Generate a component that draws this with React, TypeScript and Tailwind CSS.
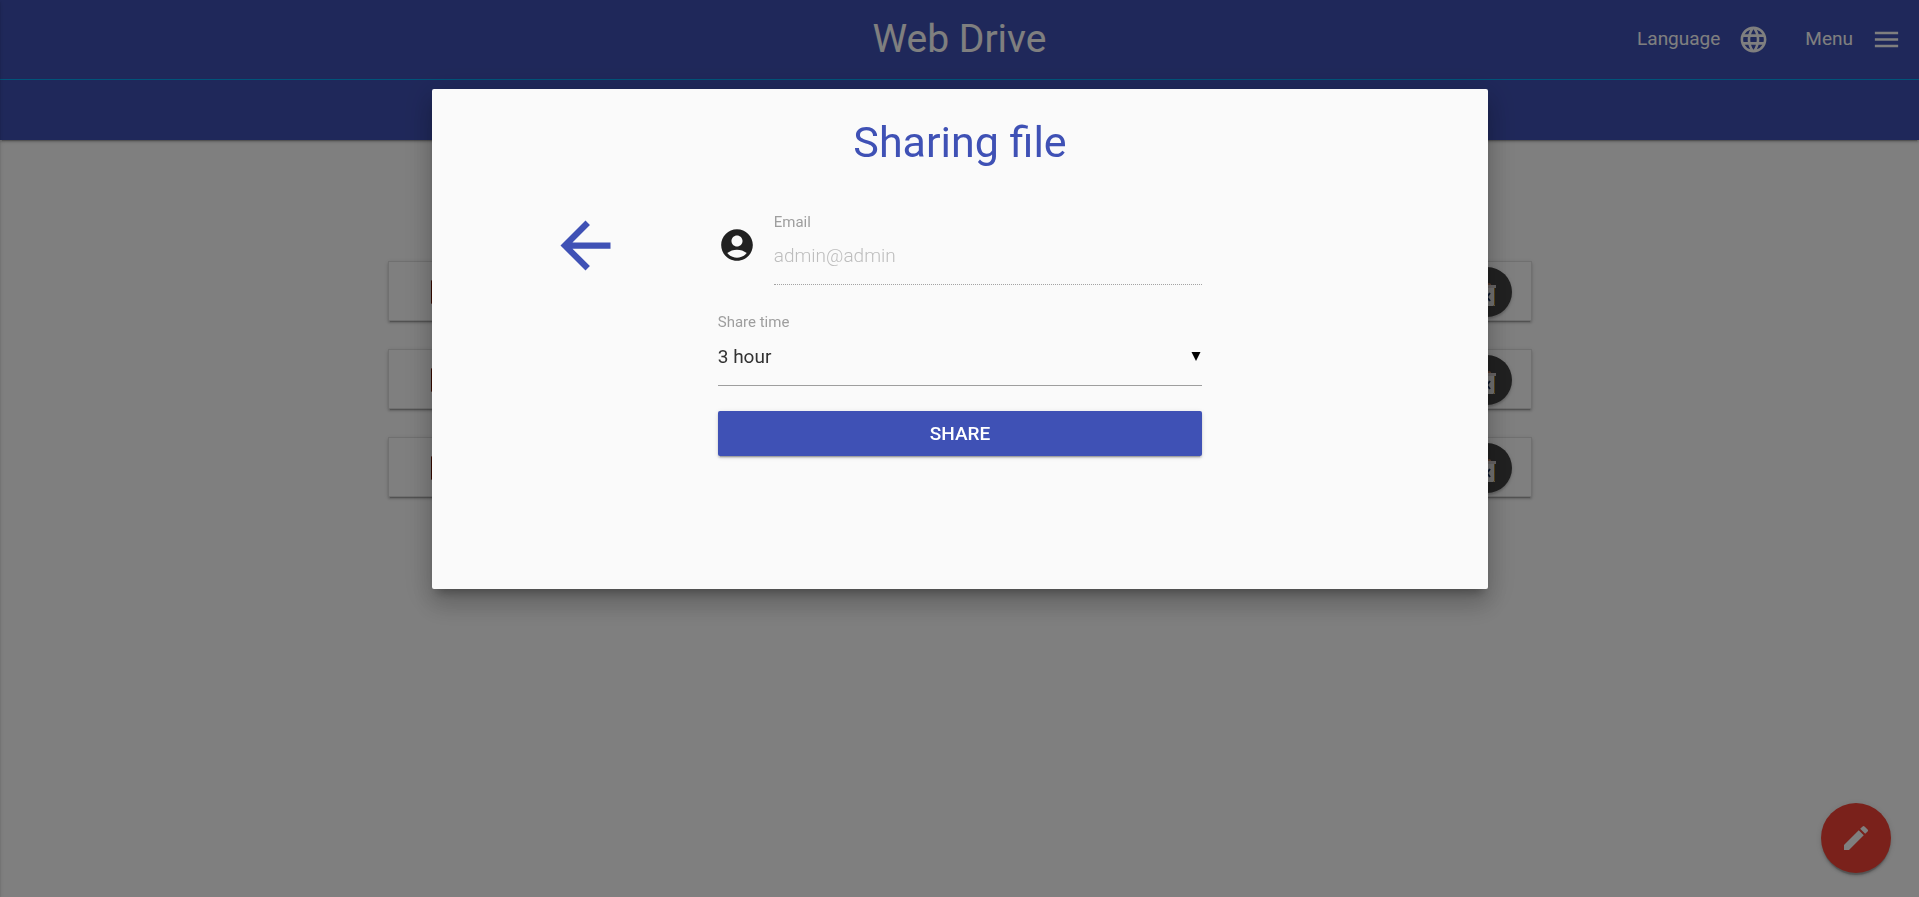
import React from "react";
import {
  MdAccountCircle,
  MdArrowBack,
  MdEdit,
  MdLanguage,
  MdMenu,
} from "react-icons/md";

const files = ["file-1", "file-2", "file-3"];

function TrashIcon() {
  return (
    <svg width="22" height="32" viewBox="0 0 22 32" aria-hidden="true">
      <path d="M6 9 8 7l3 1 2-1 2 1v1z" fill="#b0785c" />
      <rect x="2" y="9" width="18" height="3" fill="#cfc8c8" />
      <path d="M3 12h16v18H4l-1-1z" fill="#e4e4e4" />
      <path d="M18.500 12v17l-1 1" fill="none" stroke="#b08428" />
      <path d="m8 17 6 8m0-8-6 8" stroke="#1c3058" strokeWidth="2" />
    </svg>
  );
}

function FileRow({ name }: { name: string }) {
  return (
    <li className="flex h-[60px] items-center justify-between border border-[#e0e0e0] bg-white pl-[42px] pr-[19px] pt-px shadow-[0_2px_2px_0_rgba(0,0,0,0.14),0_3px_1px_-2px_rgba(0,0,0,0.2),0_1px_5px_0_rgba(0,0,0,0.12)]">
      <span className="h-6 w-5 rounded-[1px] border border-[#701400] bg-[#780808]" />
      <button
        type="button"
        aria-label={`Delete ${name}`}
        className="flex size-[50px] items-center justify-center rounded-full bg-[#424242] shadow-[0_2px_2px_0_rgba(0,0,0,0.14),0_1px_5px_0_rgba(0,0,0,0.12)]"
      >
        <TrashIcon />
      </button>
    </li>
  );
}

function Header() {
  return (
    <header className="bg-[#3f51b5] text-white shadow-[0_2px_2px_0_rgba(0,0,0,0.14),0_3px_1px_-2px_rgba(0,0,0,0.2),0_1px_5px_0_rgba(0,0,0,0.12)]">
      <div className="grid h-20 grid-cols-[1fr_auto_1fr] items-center border-b border-[#03a9f4]">
        <a href="#home" className="col-start-2 text-[39px] leading-none">
          Web Drive
        </a>
        <nav className="flex justify-end gap-0.5 pb-px text-[19px] leading-[30px]">
          <a href="#language" className="flex items-center gap-[18px] px-[17px]">
            Language
            <MdLanguage size={31} aria-hidden="true" />
          </a>
          <a href="#menu" className="flex items-center gap-[18px] px-[17px]">
            Menu
            <MdMenu size={31} aria-hidden="true" />
          </a>
        </nav>
      </div>
      <div className="h-[60px]" />
    </header>
  );
}

function ShareDialog() {
  return (
    <div className="fixed inset-0 flex items-start justify-center bg-black/50 pt-[89px]">
      <section
        role="dialog"
        aria-modal="true"
        aria-labelledby="share-title"
        className="min-h-[500px] w-full max-w-[1056px] rounded-[2px] bg-[#fafafa] pl-[22px] pr-[21px] pt-[23px] shadow-[0_16px_24px_2px_rgba(0,0,0,0.14),0_6px_30px_5px_rgba(0,0,0,0.12),0_8px_10px_-5px_rgba(0,0,0,0.3)]"
      >
        <h1
          id="share-title"
          className="text-center text-[43px] leading-[60px] text-[#3f51b5]"
        >
          Sharing file
        </h1>
        <div className="grid grid-cols-[1fr_2fr_1fr] pt-[35px]">
          <div className="flex items-start justify-center pl-[10px] pt-px">
            <button type="button" aria-label="Back" className="text-[#3f51b5]">
              <MdArrowBack size={75} aria-hidden="true" />
            </button>
          </div>
          <form className="flex flex-col px-[11px]">
            <div className="flex">
              <MdAccountCircle
                size={38}
                aria-hidden="true"
                className="mt-[19px] text-[#212121]"
              />
              <div className="ml-[18px] flex flex-1 flex-col">
                <label
                  htmlFor="email"
                  className="pt-[5px] text-[15px] leading-5 text-[#9e9e9e]"
                >
                  Email
                </label>
                <input
                  id="email"
                  type="email"
                  placeholder="admin@admin"
                  disabled
                  className="h-[53px] border-b border-dotted border-black/35 bg-transparent pb-[6px] text-[19px] font-light placeholder:text-[#bdbdbd] placeholder:opacity-100"
                />
              </div>
            </div>
            <label
              htmlFor="time"
              className="mt-[27px] text-[15px] leading-5 text-[#9e9e9e]"
            >
              Share time
            </label>
            <div className="relative flex">
              <select
                id="time"
                defaultValue="3"
                className="h-[54px] flex-1 appearance-none border-b border-[#9e9e9e] bg-transparent pb-0.5 text-[19px] text-[#333333]"
              >
                <option value="1">1 hour</option>
                <option value="3">3 hour</option>
                <option value="24">24 hour</option>
              </select>
              <svg
                width="10"
                height="9"
                viewBox="0 0 10 9"
                aria-hidden="true"
                className="pointer-events-none absolute right-px top-5"
              >
                <path d="M.5 0h9L5 9z" fill="#000" />
              </svg>
            </div>
            <button
              type="submit"
              className="mt-[25px] h-[45px] rounded-[2px] bg-[#3f51b5] pt-px text-[19px] font-medium text-white shadow-[0_2px_2px_0_rgba(0,0,0,0.14),0_3px_1px_-2px_rgba(0,0,0,0.2),0_1px_5px_0_rgba(0,0,0,0.12)]"
            >
              SHARE
            </button>
          </form>
        </div>
      </section>
    </div>
  );
}

export default function App() {
  return (
    <div className="min-h-screen bg-white font-[Roboto,sans-serif]">
      <Header />
      <aside
        aria-label="Menu drawer"
        className="fixed inset-y-0 right-full w-[300px] bg-white shadow-[0_2px_2px_0_rgba(0,0,0,0.14),0_1px_5px_0_rgba(0,0,0,0.12)]"
      />
      <main className="mx-auto w-full max-w-[1144px] pt-[121px]">
        <ul className="flex flex-col gap-7">
          {files.map((name) => (
            <FileRow key={name} name={name} />
          ))}
        </ul>
      </main>
      <button
        type="button"
        aria-label="Edit"
        className="fixed bottom-6 right-7 flex size-[70px] items-center justify-center rounded-full bg-[#f44336] text-white shadow-[0_3px_3px_0_rgba(0,0,0,0.14),0_1px_7px_0_rgba(0,0,0,0.12),0_3px_1px_-1px_rgba(0,0,0,0.2)]"
      >
        <MdEdit size={32} aria-hidden="true" />
      </button>
      <ShareDialog />
    </div>
  );
}
